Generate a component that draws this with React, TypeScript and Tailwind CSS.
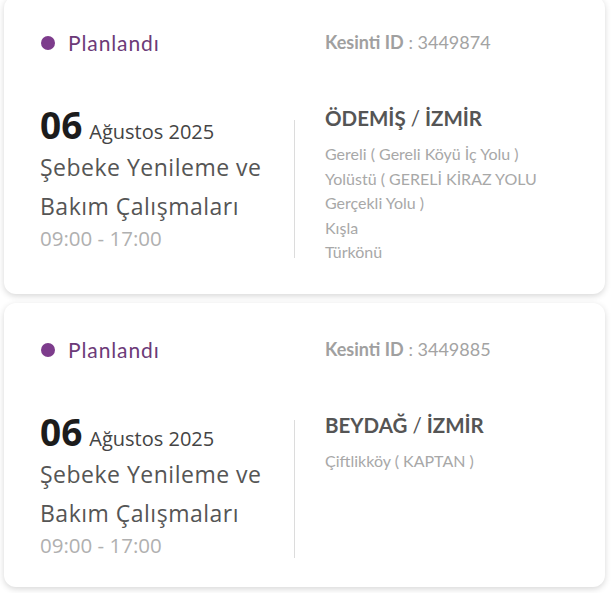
import React from "react";

type Outage = {
  id: string;
  day: string;
  month: string;
  title: string[];
  time: string;
  place: string;
  streets: string[];
};

const outages: Outage[] = [
  {
    id: "3449874",
    day: "06",
    month: "Ağustos 2025",
    title: ["Şebeke Yenileme ve", "Bakım Çalışmaları"],
    time: "09:00 - 17:00",
    place: "ÖDEMİŞ",
    streets: [
      "Gereli ( Gereli Köyü İç Yolu )",
      "Yolüstü ( GERELİ KİRAZ YOLU",
      "Gerçekli Yolu )",
      "Kışla",
      "Türkönü",
    ],
  },
  {
    id: "3449885",
    day: "06",
    month: "Ağustos 2025",
    title: ["Şebeke Yenileme ve", "Bakım Çalışmaları"],
    time: "09:00 - 17:00",
    place: "BEYDAĞ",
    streets: ["Çiftlikköy ( KAPTAN )"],
  },
];

export default function App() {
  return (
    <div className="min-h-[593px] w-[612px] overflow-hidden bg-white pl-[4px] pr-[7px]">
      <div className="-mt-[4px] flex flex-col gap-[9px]">
        {outages.map((o) => (
          <OutageCard key={o.id} outage={o} />
        ))}
      </div>
    </div>
  );
}

function OutageCard({ outage }: { outage: Outage }) {
  return (
    <div className="rounded-[12px] bg-white px-[36px] pt-[32px] pb-[29px] shadow-[0_2px_6px_rgba(0,0,0,0.16)]">
      {/* Status + id */}
      <div className="flex items-center font-['Lato',sans-serif]">
        <div className="flex w-[285px] items-center gap-[13px] pl-[1px]">
          <span className="h-[14px] w-[14px] rounded-full bg-[#7d3c8c]" />
          <span className="text-[21px] leading-[30px] tracking-[0.9px] text-[#6c3a78]">Planlandı</span>
        </div>
        <p className="-mt-[2px] text-[18px] leading-[30px] text-[#a3a3a3]">
          <span className="font-bold text-[#a0a0a0]">Kesinti ID</span> : {outage.id}
        </p>
      </div>

      {/* Body */}
      <div className="mt-[47px] flex items-center">
        <div className="w-[254px] self-start font-['Open_Sans',sans-serif]">
          <div className="flex h-[40px] items-baseline leading-[40px]">
            <span className="text-[37px] font-bold text-[#1c1c1c]">{outage.day}</span>
            <span className="ml-[7px] text-[20px] text-[#444]">{outage.month}</span>
          </div>
          <div className="mt-[3px] text-[23px] leading-[39px] tracking-[0.5px] text-[#555]">
            {outage.title.map((t) => (
              <p key={t}>{t}</p>
            ))}
          </div>
          <p className="-mt-[1px] text-[20.5px] leading-[26px] text-[#b0b0b0]">{outage.time}</p>
        </div>

        <div className="mt-2 h-[138px] w-px bg-[#dcdcdc]" />

        <div className="self-start pl-[30px] font-['Lato',sans-serif]">
          <p className="text-[20.5px] font-bold leading-[26px] text-[#555]">
            {outage.place} <span className="font-normal">/</span> İZMİR
          </p>
          <div className="mt-[11px] text-[16px] leading-[24.5px] text-[#a8a8a8]">
            {outage.streets.map((s) => (
              <p key={s}>{s}</p>
            ))}
          </div>
        </div>
      </div>
    </div>
  );
}
